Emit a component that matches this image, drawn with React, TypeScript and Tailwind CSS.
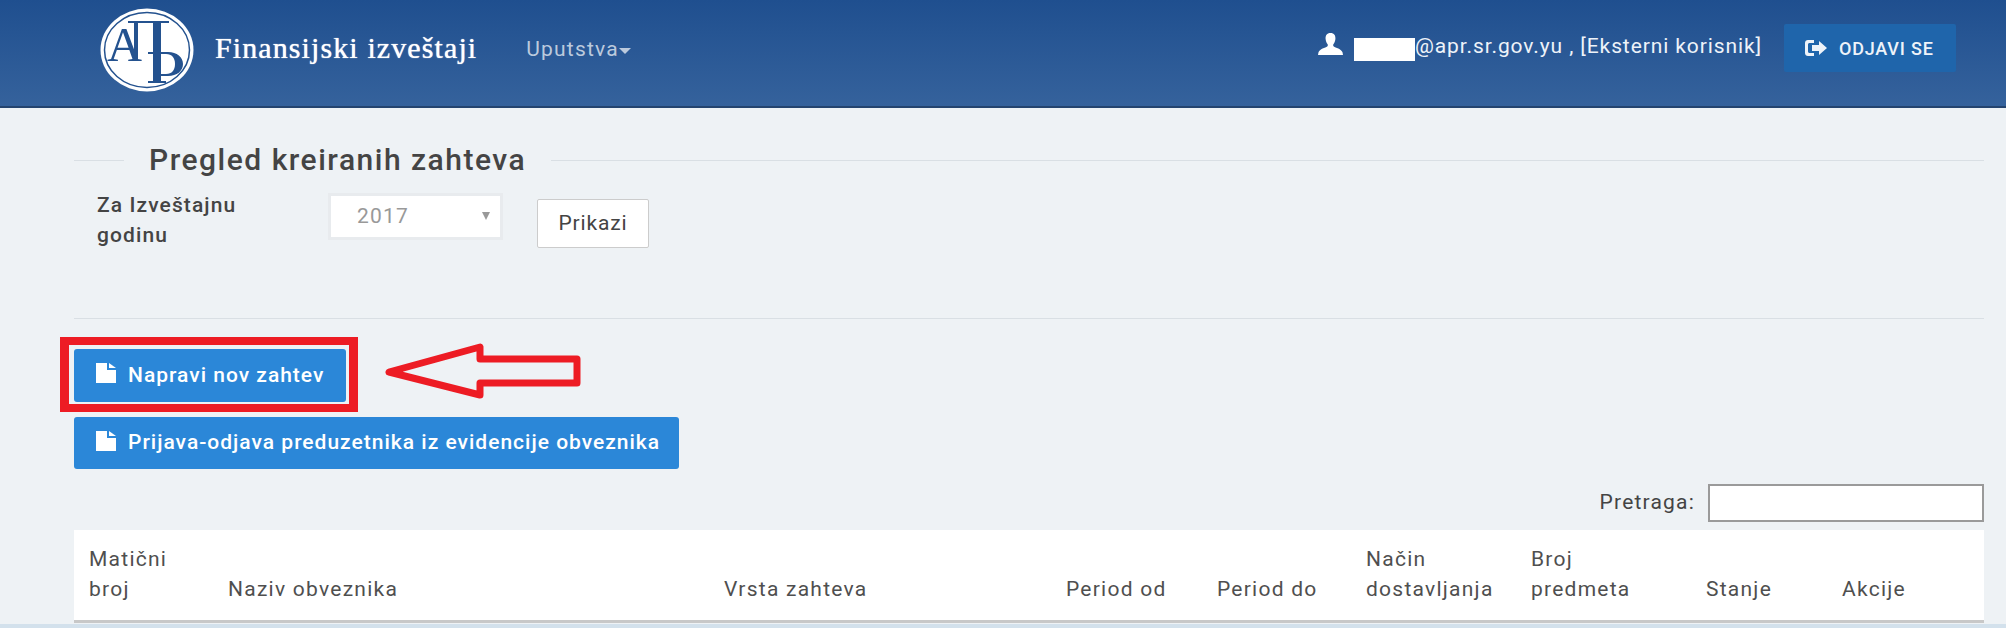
const FONT = "font-['Roboto','Liberation_Sans',sans-serif]";

const columns = [
  { label: ["Matični", "broj"], width: "w-[139px]" },
  { label: ["Naziv obveznika"], width: "w-[496px]" },
  { label: ["Vrsta zahteva"], width: "w-[342px]" },
  { label: ["Period od"], width: "w-[151px]" },
  { label: ["Period do"], width: "w-[149px]" },
  { label: ["Način", "dostavljanja"], width: "w-[165px]" },
  { label: ["Broj", "predmeta"], width: "w-[175px]" },
  { label: ["Stanje"], width: "w-[136px]" },
  { label: ["Akcije"], width: "" },
];

function ApLogo() {
  return (
    <svg width="94" height="84" viewBox="0 0 94 84" className="mt-[4px] shrink-0">
      <ellipse cx="47" cy="42" rx="46.500" ry="41.500" fill="#fff" />
      <ellipse cx="47" cy="42" rx="42.500" ry="37.500" fill="none" stroke="#24528f" strokeWidth="1.500" />
      <g fill="#24528f">
        <text x="7" y="53" fontSize="48" fontFamily="'Liberation Serif', serif" textLength="35" lengthAdjust="spacingAndGlyphs">A</text>
        {/* П with the tall right leg shared by the Р */}
        <rect x="28" y="13" width="41" height="2" />
        <rect x="34" y="13" width="4" height="40" />
        <rect x="53" y="13" width="8" height="60" />
        <rect x="48" y="73" width="18" height="2" />
        <path d="M48 44h20c9 0 15 5 15 12s-6 12-15 12h-7v-2h5c6 0 9-4 9-10s-3-10-9-10H48z" />
      </g>
    </svg>
  );
}

function UserIcon() {
  return (
    <svg width="25" height="22" viewBox="0 0 25 22" className="mb-[8px] shrink-0">
      <path
        fill="#fff"
        d="M12.500 0C8.800 0 7.300 2.600 7.600 6c.2 2.200 1 4 2 5.200.4.600.3 1.600-.4 2.200C7.600 14.900 1.500 15.600.5 19.300L0 22h25l-.5-2.700c-1-3.700-7.100-4.400-8.700-5.900-.7-.6-.8-1.600-.4-2.200 1-1.200 1.800-3 2-5.200C17.700 2.600 16.200 0 12.500 0z"
      />
    </svg>
  );
}

function SignOutIcon() {
  return (
    <svg width="22" height="16" viewBox="0 0 22 16" className="shrink-0">
      <path fill="#eef3f9" d="M3 0h6v3H4.500C3.700 3 3 3.700 3 4.500v7c0 .8.7 1.500 1.500 1.500H9v3H3c-1.700 0-3-1.300-3-3V3c0-1.700 1.300-3 3-3z" />
      <path fill="#eef3f9" d="M7 5h7V1l8 7-8 7v-4H7z" />
    </svg>
  );
}

function FileIcon() {
  return (
    <svg width="20" height="20" viewBox="0 0 20 20" className="mb-[5px] shrink-0">
      <path fill="#fff" d="M0 0h11v7h9v13H0z" />
      <path fill="#fff" d="M13 0l7 5h-7z" />
    </svg>
  );
}

function BlueButton({ label, size }: { label: string; size: string }) {
  return (
    <button className={`flex items-center gap-3 rounded-[3px] bg-[#2b87d8] pl-[22px] text-[21px] font-medium tracking-[1px] text-white ${size}`}>
      <FileIcon />
      {label}
    </button>
  );
}

export default function App() {
  return (
    <div className={`h-[628px] w-[2006px] overflow-hidden bg-[#eef2f5] ${FONT}`}>
      <header className="flex h-[108px] items-center border-b-2 border-[#24446f] bg-gradient-to-b from-[#1f4f8f] to-[#35629c] pb-[10px] pl-[100px] pr-[50px]">
        <ApLogo />
        <span className="mb-[2px] ml-[21px] font-['Liberation_Serif',serif] text-[30px] tracking-[1.100px] text-white [text-shadow:0_0_1px_#fff]">Finansijski izveštaji</span>
        <span className="ml-[49px] mt-[4px] flex items-center text-[21px] tracking-[1.200px] text-[#bccadd]">
          Uputstva
          <span className="mt-0.5 h-0 w-0 border-x-[6px] border-t-[6px] border-x-transparent border-t-[#bccadd]" />
        </span>
        <div className="ml-auto flex items-center">
          <UserIcon />
          <span className="mb-[2px] ml-[11px] flex items-center text-[21px] tracking-[0.900px] text-[#eef3f9]">
            <span className="mt-[4px] h-[23px] w-[61px] bg-white" />
            @apr.sr.gov.yu , [Eksterni korisnik]
          </span>
          <button className="ml-[22px] flex h-[48px] w-[172px] items-center gap-[12px] rounded-[2px] bg-[#1f65ab] pl-[21px] text-[18px] font-medium tracking-[0.800px] text-[#eef3f9]">
            <SignOutIcon />
            ODJAVI SE
          </button>
        </div>
      </header>

      <main className="relative pl-[74px] pr-[22px]">
        <div className="flex items-center pt-[34px]">
          <div className="h-px w-[50px] bg-[#d9dfe4]" />
          <h2 className="mx-[25px] text-[30px] font-medium leading-[36px] tracking-[1.500px] text-[#444]">Pregled kreiranih zahteva</h2>
          <div className="h-px flex-1 bg-[#d9dfe4]" />
        </div>

        <div className="mt-[15px] flex h-[126px] items-start border-b border-[#d9dfe4]">
          <label className="ml-[23px] mt-[-3px] w-[231px] text-[21px] font-medium leading-[30px] tracking-[1.100px] text-[#444]">
            Za Izveštajnu
            <br />
            godinu
          </label>
          <div className="relative flex h-[47px] w-[175px] items-center border-[3px] border-[#e8ebee] bg-white pl-[26px] text-[21px] tracking-[1.200px] text-[#999]">
            2017
            <span className="absolute right-[10px] top-[16px] h-0 w-0 border-x-[4.500px] border-t-[8px] border-x-transparent border-t-[#999]" />
          </div>
          <button className="ml-[34px] mt-[6px] h-[49px] w-[112px] rounded-[2px] border border-[#ccc] bg-white text-[21px] tracking-[0.850px] text-[#444]">Prikazi</button>
        </div>

        <div className="mt-[30px] flex flex-col items-start gap-[15px]">
          <BlueButton label="Napravi nov zahtev" size="h-[53px] w-[272px]" />
          <BlueButton label="Prijava-odjava preduzetnika iz evidencije obveznika" size="h-[52px] w-[605px]" />
        </div>

        <div className="mt-[15px] flex h-[38px] items-center justify-end">
          <span className="text-[21px] tracking-[1.200px] text-[#444]">Pretraga:</span>
          <input className="ml-[13px] h-[38px] w-[276px] border-2 border-[#9a9a9a] bg-white" />
        </div>

        <table className="mt-[8px] w-full table-fixed border-b-[3px] border-[#c8c8c8] bg-white">
          <thead>
            <tr className="h-[90px]">
              {columns.map((col) => (
                <th key={col.label[0]} className={`pb-[16px] pl-[15px] pt-[14px] text-left align-bottom text-[21px] font-normal leading-[30px] tracking-[1.250px] text-[#4f4f4f] ${col.width}`}>
                  {col.label.map((line) => (
                    <div key={line}>{line}</div>
                  ))}
                </th>
              ))}
            </tr>
          </thead>
        </table>

        {/* Red annotation over the first button */}
        <div className="absolute left-[60px] top-[229px] h-[75px] w-[298px] border-x-[9px] border-y-[8px] border-[#ed1c24]" />
        <svg className="absolute left-[380px] top-[232px]" width="204" height="60" viewBox="0 0 204 60">
          <path
            d="M9 32 L100 7 V19 H197 V43 H100 V55 Z"
            fill="none"
            stroke="#ed1c24"
            strokeWidth="7"
            strokeLinejoin="round"
          />
        </svg>
      </main>
      <div className="mt-px h-[4px] bg-[#d3e1ec]" />
    </div>
  );
}
